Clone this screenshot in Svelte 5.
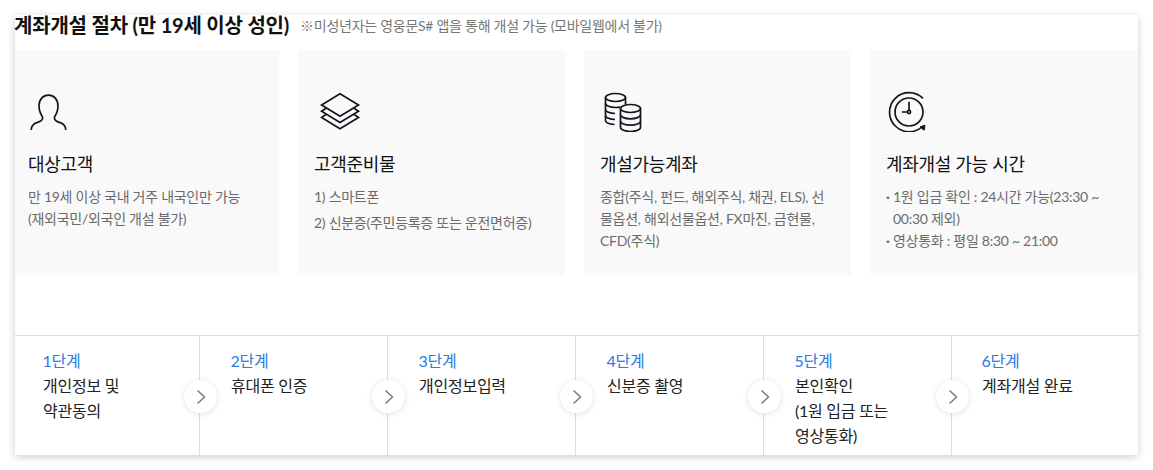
<script>
  const infos = [
    { icon: 'user', title: '대상고객', lines: ['만 19세 이상 국내 거주 내국인만 가능', '(재외국민/외국인 개설 불가)'] },
    { icon: 'layers', title: '고객준비물', items: ['1) 스마트폰', '2) 신분증(주민등록증 또는 운전면허증)'] },
    { icon: 'coins', title: '개설가능계좌', lines: ['종합(주식, 펀드, 해외주식, 채권, ELS), 선', '물옵션, 해외선물옵션, FX마진, 금현물,', 'CFD(주식)'] },
    { icon: 'clock', title: '계좌개설 가능 시간', bullets: [['1원 입금 확인 : 24시간 가능(23:30 ~', '00:30 제외)'], ['영상통화 : 평일 8:30 ~ 21:00']] }
  ];
  const steps = [
    { no: '1단계', lines: ['개인정보 및', '약관동의'] },
    { no: '2단계', lines: ['휴대폰 인증'] },
    { no: '3단계', lines: ['개인정보입력'] },
    { no: '4단계', lines: ['신분증 촬영'] },
    { no: '5단계', lines: ['본인확인', '(1원 입금 또는', '영상통화)'] },
    { no: '6단계', lines: ['계좌개설 완료'] }
  ];
</script>

<div class="page">
  <div class="panel">
    <div class="head">
      <h2>계좌개설 절차 (만 19세 이상 성인)</h2>
      <span class="note">※미성년자는 영웅문S# 앱을 통해 개설 가능 (모바일웹에서 불가)</span>
    </div>

    <div class="infos">
      {#each infos as info}
        <div class="info">
          <svg class="icon {info.icon}" width="42" height="42" viewBox="0 0 42 42" fill="none" stroke="#14141e" stroke-width="1.7">
            {#if info.icon === 'user'}
              <path d="M3.200 40c0-4.500 3-6.600 6.400-7.600 3.200-1 5-2 5-4.300 0-1.800-1-2.600-2-4.600-1-2-1.600-4.200-1.600-7.500C11 9.500 15 5.200 20.500 5.200S30 9.500 30 16c0 3.300-.6 5.500-1.600 7.500-1 2-2 2.800-2 4.600 0 2.300 1.800 3.300 5 4.300 3.400 1 6.400 3.100 6.400 7.600" />
            {:else if info.icon === 'layers'}
              <path d="M21 3.800 39.500 15 21 26.300 2.600 15Z" />
              <path d="M7 18.300 2.600 21.200 21 32.400 39.500 21.200 35 18.300" />
              <path d="M7 24.500 2.600 27.400 21 38.700 39.500 27.400 35 24.500" />
            {:else if info.icon === 'coins'}
              <ellipse cx="12.500" cy="7.500" rx="10" ry="4" />
              <path d="M2.500 7.500v23c0 2 3.500 3.600 9 4" />
              <path d="M22.500 7.500v7" />
              <path d="M2.500 13.500c0 2.200 4.500 4 10 4 1.500 0 3-.1 4.500-.4" />
              <path d="M2.500 19.500c0 2.200 4.500 4 9.500 4" />
              <path d="M2.500 25.500c0 2.200 4.500 4 9.500 4" />
              <ellipse cx="27.500" cy="18.500" rx="10" ry="4" />
              <path d="M17.500 18.500v19c0 2.200 4.500 4 10 4s10-1.800 10-4v-19" />
              <path d="M17.500 24.800c0 2.200 4.500 4 10 4s10-1.800 10-4" />
              <path d="M17.500 31.200c0 2.200 4.500 4 10 4s10-1.800 10-4" />
            {:else}
              <circle cx="22" cy="22" r="14" />
              <path d="M36 8.300A19.600 19.600 0 1 0 36 36" />
              <path d="M33 37l5-1.800-.8 5Z" fill="#14141e" stroke-width="1" />
              <circle cx="22" cy="22" r="1.600" />
              <path d="M22 20.400V11.700M20.400 22H14.700" />
            {/if}
          </svg>
          <h3>{info.title}</h3>
          {#if info.lines}
            <p>
              {#each info.lines as line}<span class="ln">{line}</span>{/each}
            </p>
          {:else if info.items}
            <ul class="items">
              {#each info.items as item}<li>{item}</li>{/each}
            </ul>
          {:else}
            <ul class="bullets">
              {#each info.bullets as item}
                <li>{#each item as line}<span class="ln">{line}</span>{/each}</li>
              {/each}
            </ul>
          {/if}
        </div>
      {/each}
    </div>

    <div class="steps">
      {#each steps as step, i}
        <div class="step">
          <strong>{step.no}</strong>
          {#each step.lines as line}<span class="ln">{line}</span>{/each}
          {#if i < steps.length - 1}
            <span class="arrow">
              <svg width="10" height="16" viewBox="0 0 10 16" fill="none" stroke="#777" stroke-width="1.400"><path d="M1.500 1.500 8.500 8l-7 6.500" /></svg>
            </span>
          {/if}
        </div>
      {/each}
    </div>
  </div>
</div>

<style>
  :global(body) { background: #fff; }
  .page { height: 470px; box-sizing: border-box; padding: 15px; overflow: hidden; }
  .panel {
    width: 1123px;
    height: 440px;
    background: #fff;
    box-shadow: 0 2px 8px rgba(0, 0, 0, 0.2);
    display: flex;
    flex-direction: column;
    font-family: Lato, "Noto Sans CJK KR", sans-serif;
  }
  .head { display: flex; align-items: center; gap: 11px; height: 35px; margin: -15px 0 0 -1px; padding-top: 7px; white-space: nowrap; }
  h2 { margin: 0; font-size: 20px; font-weight: 700; color: #111; letter-spacing: -0.2px; }
  .note { font-size: 14px; color: #777; letter-spacing: -0.27px; }
  .infos { display: flex; gap: 19px; margin-top: 8px; }
  .info { flex: 0 0 267px; height: 225px; box-sizing: border-box; padding: 40px 10px 0 16px; background: #f9f9f9; }
  .info:first-child { flex-basis: 264px; padding-left: 13px; }
  .info:last-child { flex-basis: 268px; }
  .icon { display: block; }
  .icon.layers { margin-left: 5px; }
  .icon.coins { margin-left: 3px; }
  .icon.clock { margin-left: 1px; }
  h3 { margin: 20px 0 10px; font-size: 18px; font-weight: 400; line-height: 24px; color: #111; letter-spacing: -0.3px; }
  p, ul { margin: 0; padding: 0; list-style: none; font-size: 14px; line-height: 22px; color: #6b6b6b; letter-spacing: -0.27px; }
  .items li + li { margin-top: 4px; }
  .bullets li { position: relative; padding-left: 7px; }
  .bullets li::before { content: "·"; position: absolute; left: 0; font-weight: 700; }
  .ln { display: block; white-space: nowrap; }
  .steps { display: flex; margin-top: 60px; flex: 1; min-height: 0; border-top: 1px solid #dedede; }
  .step { position: relative; flex: 0 0 188px; box-sizing: border-box; padding: 13px 0 0 31px; border-right: 1px solid #dedede; font-size: 16px; line-height: 25px; color: #222; letter-spacing: -0.25px; }
  .step:first-child { flex-basis: 185px; padding-left: 28px; }
  .step:last-child { border-right: 0; flex: 1; padding-left: 30px; }
  .step strong { display: block; font-weight: 400; color: #2a7de1; line-height: 24px; margin-left: -0.5px; }
  .arrow { position: absolute; right: -18px; top: 44px; z-index: 1; width: 33px; height: 33px; border-radius: 50%; background: #fff; box-shadow: 0 1px 6px rgba(0, 0, 0, 0.12); display: flex; align-items: center; justify-content: center; }
</style>
